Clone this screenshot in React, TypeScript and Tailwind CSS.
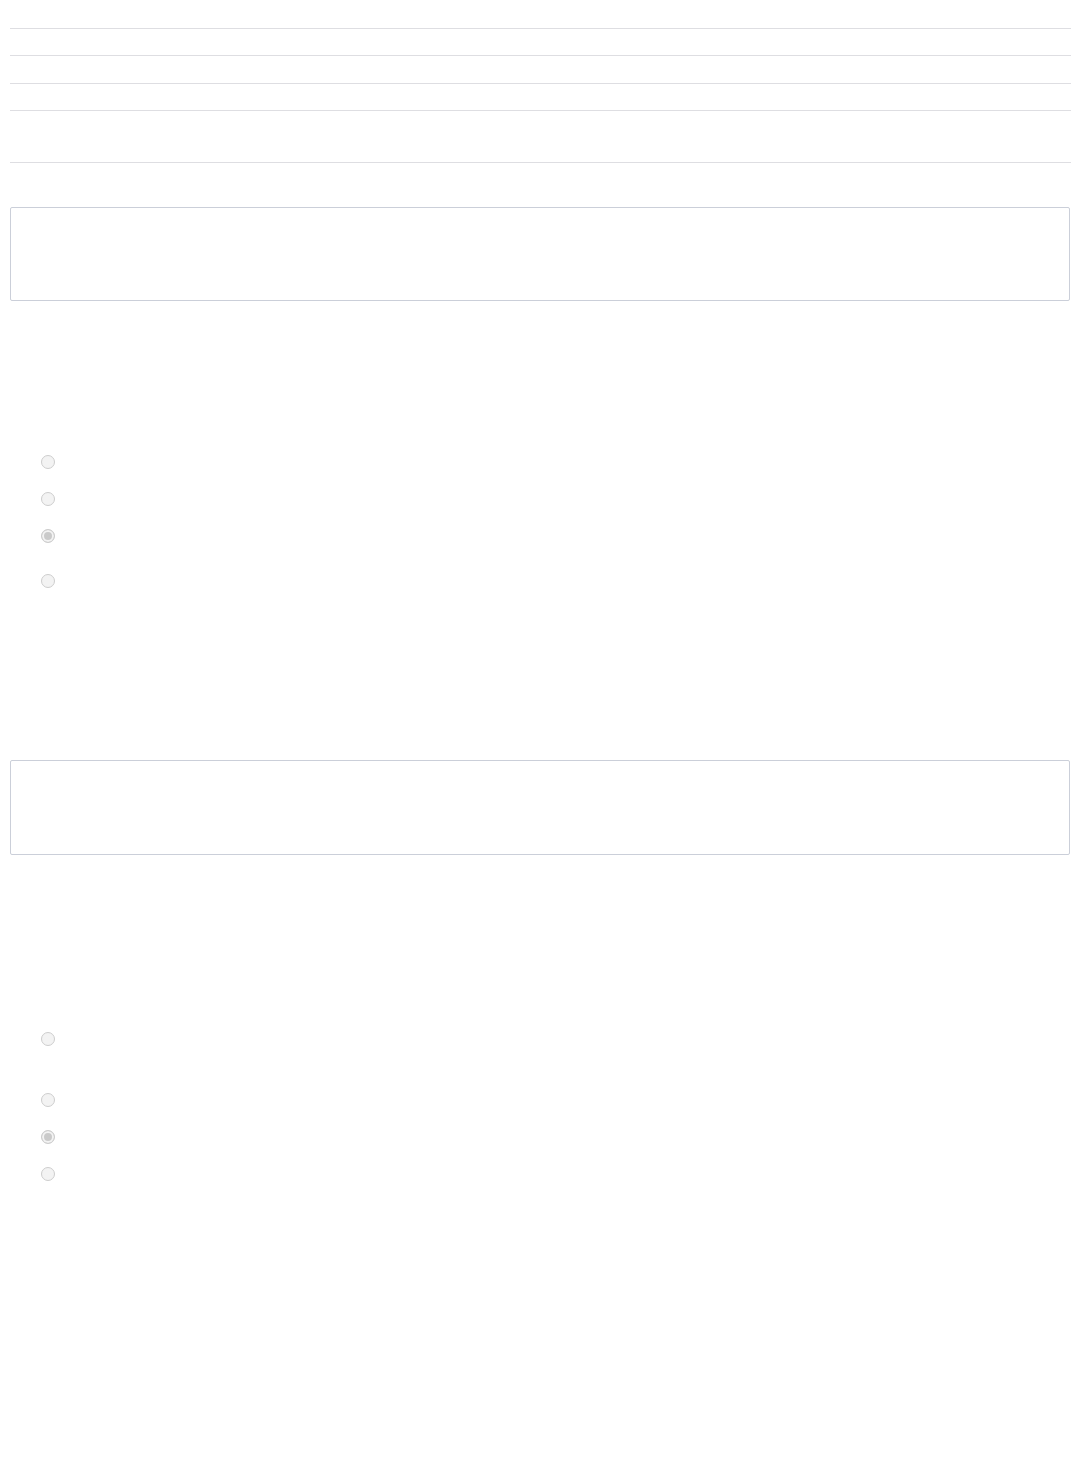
import React from "react";

function Radio({ checked, top }: { checked?: boolean; top: string }) {
  return (
    <div className={`flex items-center pl-[31px] h-[14px] ${top}`}>
      <input
        type="radio"
        disabled
        defaultChecked={checked}
        className="appearance-none m-0 w-[14px] h-[14px] block rounded-full border border-[#cdcdcd] bg-[#f3f3f3] checked:bg-[#cacaca] checked:shadow-[inset_0_0_0_2px_#f3f3f3]"
      />
      <span className="ml-2 text-sm text-white"></span>
    </div>
  );
}

export default function App() {
  return (
    <div
      className="bg-white min-h-[1480px] w-full pl-[10px] pr-[8px]"
      style={{ fontFamily: "'Liberation Sans', Arial, sans-serif" }}
    >
      <div className="h-[29px] border-b border-[#dedee2]" />
      <div className="h-[27px] border-b border-[#dedee2]" />
      <div className="h-[28px] border-b border-[#dedee2]" />
      <div className="h-[27px] border-b border-[#dedee2]" />
      <div className="h-[52px] border-b border-[#dedee2]" />

      <div className="mt-[44px] mr-[1px] h-[94px] border border-[#cbcfd9] rounded-[2px] bg-white" />

      <div className="mt-[154px] flex flex-col">
        <Radio top="" />
        <Radio top="mt-[23px]" />
        <Radio top="mt-[23px]" checked />
        <Radio top="mt-[31px]" />
      </div>

      <div className="mt-[172px] mr-[1px] h-[95px] border border-[#cbcfd9] rounded-[2px] bg-white" />

      <div className="mt-[177px] flex flex-col">
        <Radio top="" />
        <Radio top="mt-[47px]" />
        <Radio top="mt-[23px]" checked />
        <Radio top="mt-[23px]" />
      </div>
    </div>
  );
}
